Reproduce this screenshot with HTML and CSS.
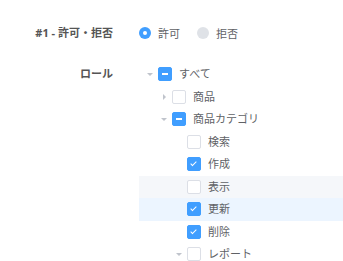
FILE: index.html
```html
<!DOCTYPE html>
<html lang="ja">
<head>
    <meta charset="UTF-8">
    <meta name="viewport" content="width=device-width, initial-scale=1.0">
    <title>権限設定</title>
    <link rel="stylesheet" href="styles.css">
</head>
<body>
    <div class="form">
        <div class="form-item">
            <label class="form-label">#1 - 許可・拒否</label>
            <div class="form-content radios">
                <label class="radio checked"><span class="radio-dot"></span>許可</label>
                <label class="radio disabled"><span class="radio-dot"></span>拒否</label>
            </div>
        </div>

        <div class="form-item roles">
            <label class="form-label">ロール</label>
            <div class="form-content tree">
                <div class="node level-1">
                    <span class="arrow down"></span>
                    <span class="checkbox half"></span>
                    <span class="node-label">すべて</span>
                </div>
                <div class="node level-2">
                    <span class="arrow right"></span>
                    <span class="checkbox"></span>
                    <span class="node-label">商品</span>
                </div>
                <div class="node level-2">
                    <span class="arrow down"></span>
                    <span class="checkbox half"></span>
                    <span class="node-label">商品カテゴリ</span>
                </div>
                <div class="node level-3">
                    <span class="arrow leaf"></span>
                    <span class="checkbox"></span>
                    <span class="node-label">検索</span>
                </div>
                <div class="node level-3">
                    <span class="arrow leaf"></span>
                    <span class="checkbox checked"></span>
                    <span class="node-label">作成</span>
                </div>
                <div class="node level-3 hover">
                    <span class="arrow leaf"></span>
                    <span class="checkbox"></span>
                    <span class="node-label">表示</span>
                </div>
                <div class="node level-3 current">
                    <span class="arrow leaf"></span>
                    <span class="checkbox checked"></span>
                    <span class="node-label">更新</span>
                </div>
                <div class="node level-3">
                    <span class="arrow leaf"></span>
                    <span class="checkbox checked"></span>
                    <span class="node-label">削除</span>
                </div>
                <div class="node level-3">
                    <span class="arrow down"></span>
                    <span class="checkbox"></span>
                    <span class="node-label">レポート</span>
                </div>
            </div>
        </div>
    </div>
</body>
</html>
```

FILE: styles.css
```css
body {
    margin: 0;
    font-family: "Noto Sans", "Noto Sans CJK JP", sans-serif;
    font-size: 11px;
    color: #606266;
    background-color: #fff;
}

.form {
    padding-top: 22px;
}

.form-item {
    display: flex;
    align-items: flex-start;
}

.form-item.roles {
    margin-top: 19px;
}

.form-label {
    width: 113px;
    flex-shrink: 0;
    text-align: right;
    font-weight: bold;
    line-height: 22px;
    color: #555;
    margin-right: 26px;
}

.roles .form-label {
    line-height: 22.5px;
}

.form-content {
    flex: 1;
}

/* radio */
.radios {
    display: flex;
    align-items: center;
    height: 22px;
}

.radio {
    display: flex;
    align-items: center;
    margin-right: 17px;
}

.radio-dot {
    width: 12px;
    height: 12px;
    border-radius: 50%;
    box-sizing: border-box;
    margin-right: 7px;
    position: relative;
}

.radio.checked .radio-dot {
    background-color: #409eff;
}

.radio.checked .radio-dot::after {
    content: "";
    position: absolute;
    left: 4px;
    top: 4px;
    width: 4px;
    height: 4px;
    border-radius: 50%;
    background-color: #fff;
}

.radio.disabled .radio-dot {
    background-color: #dfe2e7;
}

/* tree */
.node {
    display: flex;
    align-items: center;
    height: 22.5px;
}

.node.level-1 { padding-left: 5px; }
.node.level-2 { padding-left: 19px; }
.node.level-3 { padding-left: 34px; }

.node.hover {
    background-color: #f5f7fa;
}

.node.current {
    background-color: #ecf5ff;
}

.arrow {
    width: 12px;
    height: 12px;
    position: relative;
    margin-right: 2px;
}

.arrow::after {
    content: "";
    position: absolute;
    width: 0;
    height: 0;
}

.arrow.down::after {
    left: 3px;
    top: 5px;
    border-left: 3px solid transparent;
    border-right: 3px solid transparent;
    border-top: 3px solid #c0c4cc;
}

.arrow.right::after {
    left: 5px;
    top: 3px;
    border-top: 3px solid transparent;
    border-bottom: 3px solid transparent;
    border-left: 3px solid #c0c4cc;
}

.checkbox {
    width: 14px;
    height: 14px;
    box-sizing: border-box;
    border: 1px solid #dcdfe6;
    border-radius: 2px;
    background-color: #fff;
    position: relative;
    margin-right: 7px;
}

.checkbox.checked,
.checkbox.half {
    background-color: #409eff;
    border-color: #409eff;
}

.checkbox.half::after {
    content: "";
    position: absolute;
    left: 3px;
    top: 5px;
    width: 6px;
    height: 2px;
    background-color: #fff;
}

.checkbox.checked::after {
    content: "";
    position: absolute;
    left: 4px;
    top: 2px;
    width: 2px;
    height: 5px;
    border-right: 1px solid #fff;
    border-bottom: 1px solid #fff;
    transform: rotate(45deg);
}

.node-label {
    line-height: 22.5px;
}
```
